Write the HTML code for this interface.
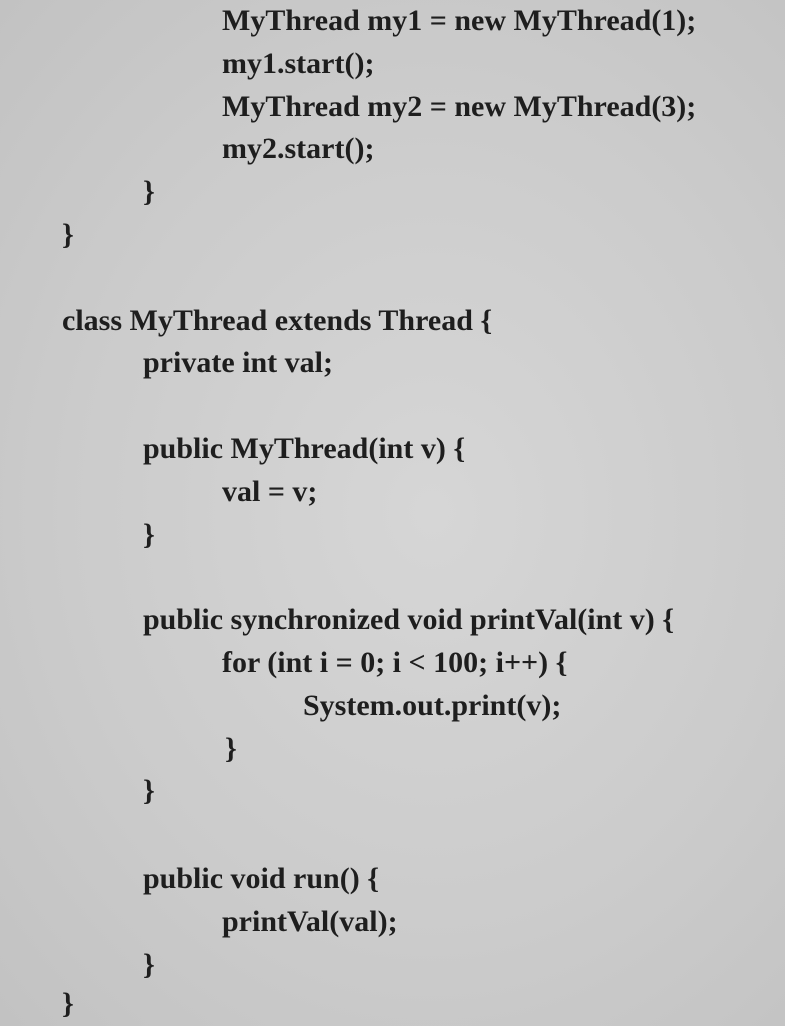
<!DOCTYPE html>
<html><head><meta charset="utf-8"><style>
html,body{margin:0;padding:0;}
body{width:785px;height:1024px;overflow:hidden;background:radial-gradient(ellipse at 55% 50%,#d6d6d6 0%,#cbcbcb 60%,#c2c2c2 100%);position:relative;}
.l{position:absolute;left:0;height:42.8px;line-height:42.8px;white-space:pre;font-family:"Liberation Serif",serif;font-size:30px;font-weight:bold;color:#1e1e1e;letter-spacing:0;}
</style></head><body>
<div class="l" style="top:0px;left:222px">MyThread my1 = new MyThread(1);</div>
<div class="l" style="top:42.8px;left:222px">my1.start();</div>
<div class="l" style="top:85.6px;left:222px">MyThread my2 = new MyThread(3);</div>
<div class="l" style="top:128.4px;left:222px">my2.start();</div>
<div class="l" style="top:171.2px;left:143px">}</div>
<div class="l" style="top:214px;left:62px">}</div>
<div class="l" style="top:299.6px;left:62px">class MyThread extends Thread {</div>
<div class="l" style="top:342.4px;left:143px">private int val;</div>
<div class="l" style="top:428px;left:143px">public MyThread(int v) {</div>
<div class="l" style="top:470.8px;left:222px">val = v;</div>
<div class="l" style="top:513.6px;left:143px">}</div>
<div class="l" style="top:599.2px;left:143px">public synchronized void printVal(int v) {</div>
<div class="l" style="top:642px;left:222px">for (int i = 0; i &lt; 100; i++) {</div>
<div class="l" style="top:684.8px;left:303px">System.out.print(v);</div>
<div class="l" style="top:727.6px;left:225px">}</div>
<div class="l" style="top:770.4px;left:143px">}</div>
<div class="l" style="top:858px;left:143px">public void run() {</div>
<div class="l" style="top:900.8px;left:222px">printVal(val);</div>
<div class="l" style="top:943.6px;left:143px">}</div>
<div class="l" style="top:983px;left:62px">}</div>
</body></html>
